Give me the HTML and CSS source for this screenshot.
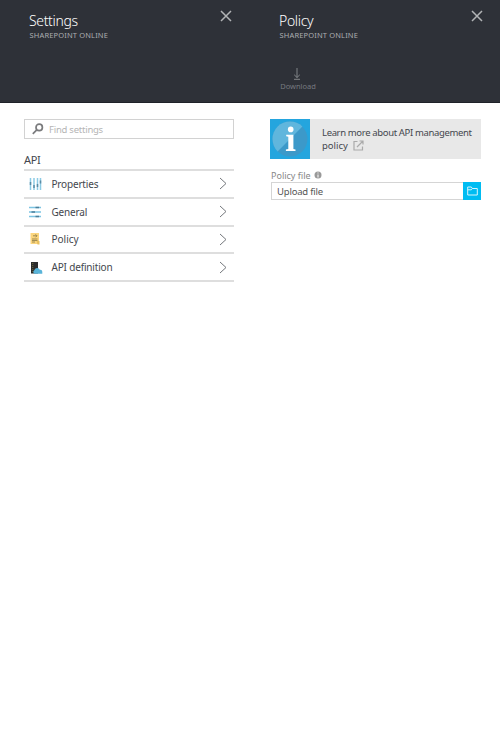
FILE: index.html
```html
<!DOCTYPE html>
<html lang="en">
<head>
<meta charset="utf-8">
<title>Settings - Policy</title>
<link rel="stylesheet" href="styles.css">
</head>
<body>
<main class="blades">
  <section class="blade settings">
    <header class="head">
      <div class="top">
        <div><h1 class="title">Settings</h1><p class="sub">SHAREPOINT ONLINE</p></div>
        <svg class="close" viewBox="0 0 12 12"><path d="M1 1l10 10M11 1L1 11"/></svg>
      </div>
    </header>
    <div class="content">
      <div class="search">
        <svg class="glass" viewBox="0 0 12 12"><circle cx="7.2" cy="4.4" r="3.2"/><path d="M4.800 6.800L.8 10.800"/></svg>
        <span class="hint">Find settings</span>
      </div>
      <h2 class="group">API</h2>
      <ul class="menu">
        <li class="row">
          <svg class="icon" viewBox="0 0 14 14"><path d="M1.500 1v12M5 1v12M8.500 1v12M11.500 1v12" stroke="#8ccbe5" stroke-width="1.500"/><path d="M1.500 5v3M5 8v3M8.500 7v3M11.500 3.500v3" stroke="#5b8ba5" stroke-width="1.500"/></svg>
          <span class="label">Properties</span>
          <svg class="chev" viewBox="0 0 8 13"><path d="M1 1l6 5.5L1 12"/></svg>
        </li>
        <li class="row">
          <svg class="icon" viewBox="0 0 14 14"><path d="M0 2.500h12M0 7h12M0 11.500h12" stroke="#7cc4e2" stroke-width="1.500"/><path d="M6.500 2.500h3.500M2.500 7h3.500M6.500 11.500h3.500" stroke="#4e7f99" stroke-width="1.500"/></svg>
          <span class="label">General</span>
          <svg class="chev" viewBox="0 0 8 13"><path d="M1 1l6 5.5L1 12"/></svg>
        </li>
        <li class="row">
          <svg class="icon" viewBox="0 0 14 14"><path d="M1.500 1H10v11H1.500z" fill="#fcd67e"/><path d="M7.500 9h3v3.500h-2z" fill="#e8c060"/><path d="M4 3.800h4M6.500 2.300L8 3.800 6.500 5.300M3 7h5.500M3 8.500h5.500M3 10h3" fill="none" stroke="#96834c" stroke-width=".9"/></svg>
          <span class="label policy">Policy</span>
          <svg class="chev" viewBox="0 0 8 13"><path d="M1 1l6 5.5L1 12"/></svg>
        </li>
        <li class="row">
          <svg class="icon" viewBox="0 0 14 14"><path d="M2 2h7v11.500H2z" fill="#2b2c2d"/><path d="M3.800 3v9" stroke="#8d853e" stroke-width=".8" stroke-dasharray="1 1"/><path d="M5.500 13.800a2 2 0 0 1-.2-3.600 2.900 2.900 0 0 1 5.500-.5 2.200 2.200 0 0 1 2.500 2.100v2z" fill="#59b4d9"/></svg>
          <span class="label">API definition</span>
          <svg class="chev" viewBox="0 0 8 13"><path d="M1 1l6 5.5L1 12"/></svg>
        </li>
      </ul>
    </div>
  </section>
  <section class="blade detail">
    <header class="head">
      <div class="top">
        <div><h1 class="title">Policy</h1><p class="sub">SHAREPOINT ONLINE</p></div>
        <svg class="close" viewBox="0 0 12 12"><path d="M1 1l10 10M11 1L1 11"/></svg>
      </div>
      <div class="command">
        <svg class="down" viewBox="0 0 8 12"><path d="M4 0v9.500M1.200 6.800L4 9.500l2.800-2.700M1 11.300h6"/></svg>
        <span class="download">Download</span>
      </div>
    </header>
    <div class="content">
      <div class="info">
        <svg class="badge" viewBox="0 0 40 40"><path d="M0 0h40v40H0z" fill="#24a5de"/><circle cx="20" cy="20" r="17.500" fill="#3c99c9"/><path d="M7.600 32.400A17.500 17.500 0 0 1 32.400 7.600z" fill="#60b6dd"/><circle cx="20.700" cy="10.400" r="2.800" fill="#fff"/><path d="M16.200 15.800h7.200v14.300l2.100.5v1.500h-9.600v-1.500l2.400-.5V17.800l-2.100-.5z" fill="#fff"/></svg>
        <p class="learn"><span class="line1">Learn more about API management</span><br><span>policy</span><svg class="external" viewBox="0 0 11 11"><path d="M4.500 1.500H1v8.500h8.500V6.500M6.500 1H10v3.500M10 1L4 7"/></svg></p>
      </div>
      <div class="caption"><span class="file-label">Policy file</span><svg class="help" viewBox="0 0 8 8"><circle cx="4" cy="4" r="3.500"/><path d="M4 1.500v1M4 3.500v3"/></svg></div>
      <div class="upload"><span class="file">Upload file</span><span class="browse"><svg class="folder" viewBox="0 0 11 10"><path d="M.7 9V1h3.600l1 1.500h5V9zM.7 3.800h3.600l1-1.300"/></svg></span></div>
    </div>
  </section>
</main>
</body>
</html>
```
FILE: styles.css
```css
* { box-sizing: border-box; }
body { margin: 0; background: #fff; color: #44474e; font-family: "Noto Sans", "Open Sans", sans-serif; font-size: 10px; }
h1, h2, p, ul { margin: 0; padding: 0; font-weight: 400; }
svg { display: block; flex: none; }
span { white-space: nowrap; }
.blades { display: grid; grid-template-columns: 250px 250px; height: 749px; }
.head { height: 103px; background: #2e3138; border-bottom: 1px solid #1f2229; padding: 10px 18px 0 29px; }
.detail .head { padding-right: 17.500px; }
.top { display: flex; justify-content: space-between; height: 57px; }
.title { color: #fff; font-size: 14px; line-height: 21px; letter-spacing: -.35px; font-weight: 300; }
.sub { color: #acaeb1; font-size: 7.500px; line-height: 9px; letter-spacing: .15px; padding-left: .5px; }
.close { width: 12px; height: 12px; fill: none; stroke: #b2b4b6; stroke-width: 1.5; }
.command { display: flex; flex-direction: column; align-items: center; width: 36px; margin-left: 1px; color: #777a80; }
.down { width: 8px; height: 12px; margin: 1px 0 0 -3px; fill: none; stroke: #8b8e92; stroke-width: .9; }
.download { font-size: 7.5px; line-height: 12px; }
.content { padding: 16px 16px 0 24px; }
.search { display: flex; align-items: center; height: 20px; border: 1px solid #d2d2d2; padding-left: 7px; }
.glass { width: 12px; height: 12px; fill: none; stroke: #7a7b7d; stroke-width: 1.7; }
.hint { margin-left: 5px; color: #b5b5b5; font-size: 9.500px; letter-spacing: -.24px; }
.group { font-size: 11px; line-height: 16px; margin-top: 13px; letter-spacing: -.4px; }
.menu { list-style: none; margin-top: 1px; border-top: 2px solid #dedede; }
.row { display: grid; grid-template-columns: 27.500px 1fr 8px; align-items: center; height: 27.750px; padding-right: 7px; border-bottom: 2px solid #dedede; }
.icon { width: 14px; height: 14px; margin-left: 5px; }
.label { font-size: 10px; line-height: 14px; letter-spacing: -.18px; }
.policy { letter-spacing: 0; }
.chev { width: 8px; height: 13px; fill: none; stroke: #74777c; stroke-width: 1; }
.detail .content { padding: 16px 19px 0 20px; }
.info { display: flex; height: 40px; background: #e8e8e8; }
.badge { width: 40px; height: 40px; }
.learn { margin: 7px 0 0 12px; font-size: 9.500px; line-height: 13px; }
.line1 { letter-spacing: -.35px; }
.external { display: inline-block; width: 11px; height: 11px; margin-left: 5px; vertical-align: -2px; fill: none; stroke: #aaa; stroke-width: 1.2; }
.caption { display: flex; align-items: center; height: 14px; margin: 9px 0 0 1px; color: #888; }
.file-label { font-size: 9px; }
.help { width: 8px; height: 8px; margin-left: 3px; fill: #999; }
.help path { stroke: #fff; stroke-width: 1; }
.upload { display: flex; align-items: stretch; justify-content: space-between; height: 18px; margin-left: 1px; border: 1px solid #d5d5d5; border-right: 0; }
.file { padding-left: 5px; line-height: 17px; font-size: 9.500px; letter-spacing: -.2px; color: #555; }
.browse { display: grid; place-items: center; width: 18px; margin: -1px 0; background: #00bcf2; }
.folder { width: 11px; height: 10px; fill: none; stroke: #d8f4fc; stroke-width: 1; }
```
